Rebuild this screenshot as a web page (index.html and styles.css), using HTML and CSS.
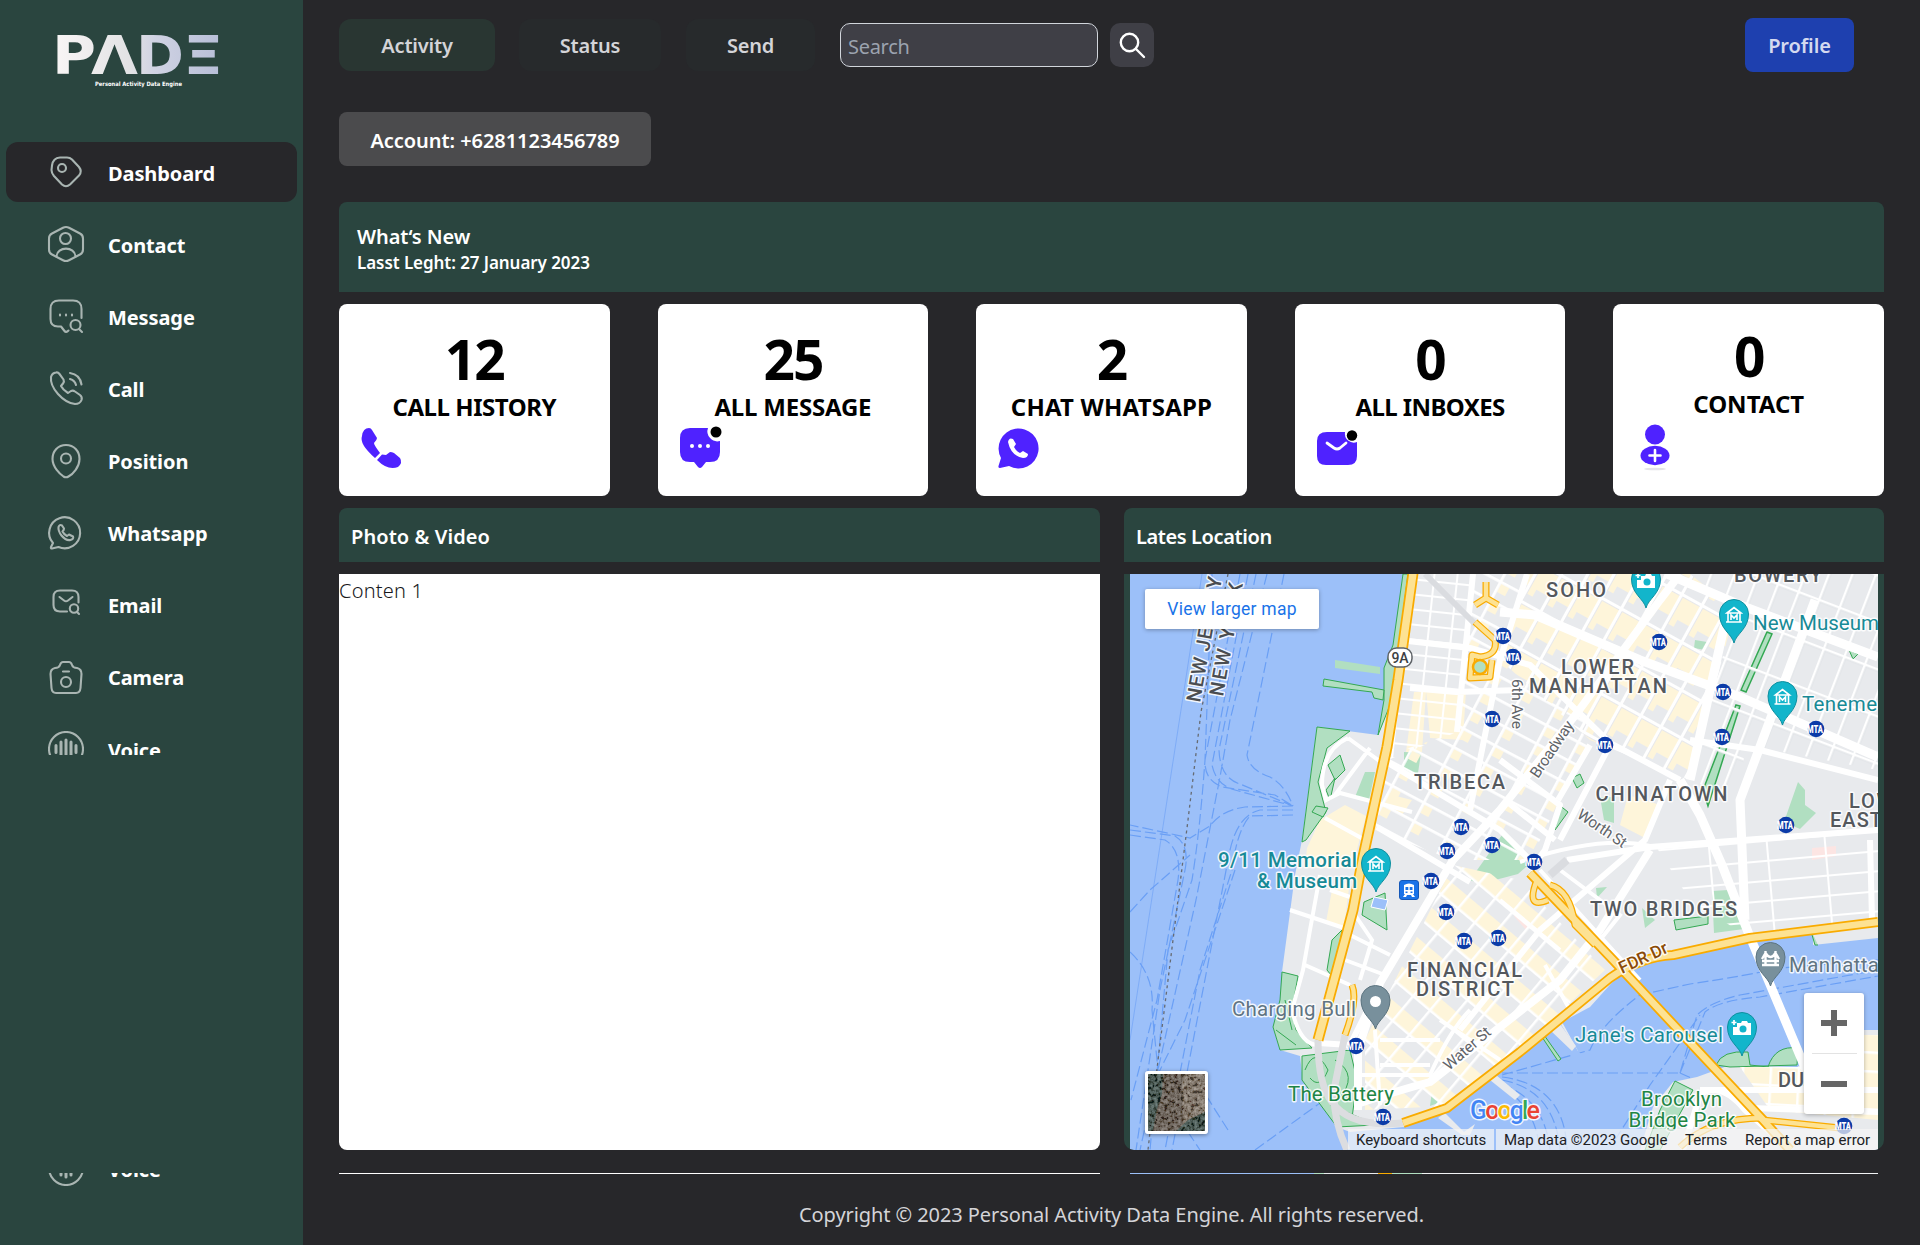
FILE: index.html
```html
<!DOCTYPE html>
<html lang="en">
<head>
<meta charset="utf-8">
<title>PADE Dashboard</title>
<link rel="stylesheet" href="styles.css">
</head>
<body>
<svg class="defs" aria-hidden="true">
  <defs>
    <symbol id="voice" viewBox="0 0 36 36"><circle cx="18" cy="18" r="17"/><path d="M8 14.500v7M13 11v14M18 9v18M23 11v14M28 14.500v7" stroke-width="3"/></symbol>
  </defs>
</svg>
<div class="app">
  <aside class="sidebar">
    <svg class="logo" viewBox="0 0 166 58" role="img" aria-label="PADE Personal Activity Data Engine">
      <defs><linearGradient id="lg" gradientUnits="userSpaceOnUse" x1="0" x2="162" y1="0" y2="0"><stop offset="0" stop-color="#f8f5f5"/><stop offset=".45" stop-color="#e2e2e4"/><stop offset=".6" stop-color="#d0d3e3"/><stop offset="1" stop-color="#b8bfd8"/></linearGradient></defs>
      <g class="logo-word" fill="url(#lg)">
        <text x="-5" y="40" textLength="44" lengthAdjust="spacingAndGlyphs">P</text>
        <text x="34" y="40" textLength="47" lengthAdjust="spacingAndGlyphs">Λ</text>
        <text x="79" y="40" textLength="48" lengthAdjust="spacingAndGlyphs">D</text>
        <text x="125.500" y="40" textLength="41" lengthAdjust="spacingAndGlyphs">Ξ</text>
      </g>
      <text class="logo-tag" x="38" y="52" textLength="87" lengthAdjust="spacingAndGlyphs">Personal Activity Data Engine</text>
    </svg>
    <nav class="nav">
      <a class="nav-item active"><svg viewBox="0 0 36 36"><path d="M4 11.500Q5 4 12 3.500L19 3.500Q22 3.500 24 5.500L31 13Q34.500 17.500 31 21.500L22 30.500Q18 34 14 30.500L6 22Q3.500 19 3.500 16Z"/><circle cx="14" cy="14" r="4"/></svg><span>Dashboard</span></a>
      <a class="nav-item"><svg viewBox="0 0 36 36"><path d="M15 1.800Q18 .2 21 1.800L32 7.500Q35 9 35 12.500V23.500Q35 27 32 28.500L21 34.200Q18 35.800 15 34.200L4 28.500Q1 27 1 23.500V12.500Q1 9 4 7.500Z"/><circle cx="17.500" cy="12.500" r="5.500"/><path d="M8.500 30.500C9 20 27 20 27.500 30.500"/></svg><span>Contact</span></a>
      <a class="nav-item"><svg viewBox="0 0 36 36"><path d="M33.500 20V11Q33.500 2.500 25 2.500H11Q2.500 2.500 2.500 11V21Q2.500 28.500 10 28.500H13L16.500 33Q18 35 20.500 32.500"/><circle cx="27.500" cy="27" r="5"/><path d="M31 31l3 3M12 16.500v1M18 16.500v1M24 16.500v1"/></svg><span>Message</span></a>
      <a class="nav-item"><svg viewBox="0 0 36 36"><path d="M3 7Q4 3 8 2.500Q10 2 11.500 4L15.500 9.500Q16.500 11.500 15 13.500L13 16Q15 20 20 23L23 21Q25 20 27 21.500L32 25Q34.500 27 33.500 30Q32 34 27 34Q18 33 10 24Q2 15 3 7ZM22 3Q32 4.500 33.500 14.500M22 9Q27 10.500 28 15"/></svg><span>Call</span></a>
      <a class="nav-item"><svg viewBox="0 0 36 36"><path d="M18 2C10 2 4.500 8 4.500 16C4.500 24 12 31 15.500 33.500Q18 35 20.500 33.500C25 31 31.500 24 31.500 16C31.500 8 26 2 18 2Z"/><circle cx="18" cy="15.500" r="5"/></svg><span>Position</span></a>
      <a class="nav-item"><svg viewBox="0 0 36 36"><path d="M5 28A15.500 15.500 0 1 1 10.500 32L4 33.500Q2.500 33.500 3 32Z"/><path d="M10.500 12Q11.500 9 14 10.500L16 13.500Q16 15 14.500 16.500Q16 19.500 19 21L21 19.500L25 21.500Q26 24 22.500 25Q18 26 13.500 20.500Q10 16 10.500 12Z"/></svg><span>Whatsapp</span></a>
      <a class="nav-item"><svg viewBox="0 0 36 36"><path d="M30.500 15.500V10Q30.500 3.500 24 3.500H12Q5.500 3.500 5.500 10V18Q5.500 24.500 12 24.500H19M11.500 10L16 13.500Q18 15 20 13.500L24.500 10"/><circle cx="26" cy="21.500" r="4.200"/><path d="M29 25l2 2"/></svg><span>Email</span></a>
      <a class="nav-item"><svg viewBox="0 0 36 36"><path d="M7 9Q11 9 12 6Q13 3 15 3H21Q23 3 24 6Q25 9 29 9Q33.500 10 33.500 15L32.500 29Q32 34 28 34H8Q4 34 3.500 29L2.500 15Q2.500 10 7 9ZM15 12.500h6"/><circle cx="18" cy="23" r="5"/></svg><span>Camera</span></a>
      <a class="nav-item"><svg><use href="#voice"/></svg><span>Voice</span></a>
    </nav>
    <div class="nav-tail"><a class="nav-item"><svg><use href="#voice"/></svg><span>Voice</span></a></div>
  </aside>

  <main class="main">
    <header class="topbar">
      <a class="tab tab-activity">Activity</a>
      <a class="tab tab-status">Status</a>
      <a class="tab tab-send">Send</a>
      <div class="search">Search</div>
      <button class="search-btn"><svg viewBox="0 0 28 28"><circle cx="11.500" cy="11.500" r="8.700"/><path d="M18 18l8 8"/></svg></button>
      <a class="profile">Profile</a>
    </header>
    <div class="account">Account: +6281123456789</div>
    <section class="news"><h2>What‘s New</h2><p>Lasst Leght: 27 January 2023</p></section>
    <section class="stats">
      <article class="stat"><strong>12</strong><span class="l1">CALL HISTORY</span>
        <svg viewBox="0 0 42 42"><path d="M2 9Q3 1 9 1Q11 1 12 3L17 11Q17 13 14 16Q14 18 20 26L15 31Q-1 17 2 9Z"/><path d="M17 33L22 27.500L26 28L30 25Q32 25 34 26L40 31Q43 36 38 40Q28 44 17 33Z"/></svg></article>
      <article class="stat"><strong>25</strong><span class="l2">ALL MESSAGE</span>
        <svg viewBox="0 0 42 42"><path d="M11 1H29A10 10 0 0 0 41 14V25Q41 35 31 35H27L23 40Q21 42 19 40L15 35H11Q1 35 1 25V11Q1 1 11 1Z"/><circle cx="37" cy="5" r="5.500" fill="#000"/><g fill="#fff"><circle cx="13" cy="19" r="2"/><circle cx="21" cy="19" r="2"/><circle cx="29" cy="19" r="2"/></g></svg></article>
      <article class="stat"><strong>2</strong><span class="l3">CHAT WHATSAPP</span>
        <svg viewBox="0 0 42 42"><path d="M4 31A20 20 0 1 1 12 39L3 41Q1 41 1.500 39Z"/><path fill="#fff" d="M11 15Q12 10 16 12L19 17L17 20Q19 24 23 26L26 24L31 27Q31 31 26 31Q14 29 11 15Z"/></svg></article>
      <article class="stat"><strong>0</strong><span class="l4">ALL INBOXES</span>
        <svg viewBox="0 0 42 42"><path d="M11 5H29A9 9 0 0 0 41 15V29Q41 38 32 38H10Q1 38 1 29V14Q1 5 11 5Z"/><circle cx="36" cy="8.500" r="5.200" fill="#000"/><path d="M11 16L18 21Q21 23 24 21L30 16" fill="none" stroke="#fff" stroke-width="2.800" stroke-linecap="round"/></svg></article>
      <article class="stat up"><strong>0</strong><span class="l5">CONTACT</span>
        <svg viewBox="0 0 42 42"><ellipse cx="21" cy="45" rx="11" ry="1.300" fill="#e4e4e8"/><circle cx="21" cy="10.500" r="10"/><ellipse cx="21" cy="31.500" rx="14.500" ry="9.700"/><path d="M21 26v11M15.500 31.500h11" stroke="#fff" stroke-width="2.600" stroke-linecap="round"/></svg></article>
    </section>
    <section class="panels">
      <div class="panel"><h3 class="p1">Photo &amp; Video</h3><div class="photo">Conten 1</div></div>
      <div class="panel"><h3 class="p2">Lates Location</h3>
        <div class="map-wrap">
          <svg class="map" viewBox="1130 574 748 576" preserveAspectRatio="none">
            <defs>
              <pattern id="gWest" width="23" height="15" patternUnits="userSpaceOnUse" patternTransform="translate(1410 578) rotate(6)"><path d="M0 0H23M0 0V15" stroke="#fff" stroke-width="4"/></pattern>
              <pattern id="gTri" width="36" height="21" patternUnits="userSpaceOnUse" patternTransform="translate(1500 580) rotate(28)"><path fill="#fef5da" d="M3 3h9v9H3z"/><path d="M0 0H36M0 0V21" stroke="#fff" stroke-width="5.500"/></pattern>
              <pattern id="gSoho" width="23" height="42" patternUnits="userSpaceOnUse" patternTransform="translate(1540 610) rotate(29)"><path fill="#fef5da" d="M0 0h23v26H10v8H0z"/><path d="M0 0H23M0 0V42" stroke="#dfe1e5" stroke-width="8"/><path d="M0 0H23M0 0V42" stroke="#fff" stroke-width="6.500"/></pattern>
              <pattern id="gEast" width="22" height="44" patternUnits="userSpaceOnUse" patternTransform="translate(1700 600) rotate(21)"><path d="M0 0H22M0 0V44" stroke="#d8dbe0" stroke-width="6.500"/><path d="M0 0H22M0 0V44" stroke="#fff" stroke-width="5"/></pattern>
              <pattern id="gTwo" width="58" height="20" patternUnits="userSpaceOnUse" patternTransform="translate(1650 850) rotate(-5)"><path d="M0 0H58M0 0V20" stroke="#fff" stroke-width="4"/></pattern>
              <pattern id="gFin" width="32" height="22" patternUnits="userSpaceOnUse" patternTransform="translate(1460 870) rotate(-50)"><path fill="#fef5da" d="M2 2h15v20H2z"/><path d="M0 0H32M0 0V22" stroke="#fff" stroke-width="5"/></pattern>
              <pattern id="gBk" width="28" height="19" patternUnits="userSpaceOnUse" patternTransform="translate(1770 1065) rotate(3)"><path fill="#fef5da" d="M0 0h28v19H0z"/><path d="M0 0H28M0 0V19" stroke="#fff" stroke-width="5"/></pattern>
              <symbol id="mta" viewBox="0 0 18 18" overflow="visible"><circle cx="9" cy="9" r="8.300" fill="#0b3ba8"/><text x="0" y="12.800" class="mta" textLength="16" lengthAdjust="spacingAndGlyphs">MTA</text></symbol>
              <path id="pin" d="M0 29C-2 20-14.500 15-14.500 0A14.500 14.500 0 0 1 14.500 0C14.500 15 2 20 0 29Z"/>
              <g id="museum" fill="none" stroke="#fff" stroke-width="1.600"><path d="M-7 -2L0 -7.500L7 -2ZM-8 7H8M-6 -2V7M6 -2V7M-3 5V0L0 3L3 0V5"/></g>
              <g id="camera"><path fill="#fff" d="M-5 -5H-1L0 -7H5L6 -5H9V7H-9V-1H-5Z"/><path d="M-8 -8V-3M-10.500 -5.500H-5.500" stroke="#fff" stroke-width="1.700"/><circle cx="1" cy="1" r="3.500" fill="#12b5cb"/></g>
            </defs>
            <rect x="1130" y="574" width="748" height="576" fill="#9cc0f9"/>
            <!-- ferry routes -->
            <g fill="none" stroke="#6a9ff5" stroke-width="1.200" stroke-dasharray="11 4">
              <path d="M1240 574L1205 760Q1204 780 1222 787L1275 795L1293 806M1248 574L1212 765Q1216 785 1235 790L1293 806M1256 574L1219 750Q1220 778 1240 784L1293 806M1267 574L1230 720L1220 777L1196 900L1140 1150M1284 574L1247 755Q1249 770 1270 777Q1285 785 1293 806M1293 806L1245 807Q1222 810 1210 826L1190 838L1130 825M1293 810L1260 810Q1238 815 1230 850L1172 1150M1293 815L1250 816Q1237 830 1232 870L1200 970L1165 1150M1130 830L1175 836Q1190 845 1185 870L1160 990L1136 1150M1130 835L1165 840Q1182 850 1178 880L1157 1000L1131 1100M1212 574L1205 760Q1200 830 1192 880L1168 950L1150 1150"/>
              <path d="M1130 912L1150 890L1190 855M1130 952Q1155 975 1152 1010L1160 1090L1200 1150M1255 1150L1320 1103M1235 870L1185 1020L1145 1100M1228 1130L1193 1075"/>
              <path d="M1502 1075L1590 1050Q1600 1025 1640 995L1690 984Q1750 975 1780 968L1878 960M1502 1073H1680L1697 1015Q1710 1002 1740 995L1878 970M1680 1073L1705 1012Q1720 1000 1760 997L1878 976M1502 1077Q1565 1085 1567 1150M1502 1080Q1555 1090 1560 1150M1502 1084Q1545 1100 1550 1150M1502 1088Q1535 1105 1540 1150M1615 1140L1650 1085L1700 1015M1680 1073L1700 1082"/>
            </g>
            <path d="M1202 574L1130 1040" stroke="#6a9ff5" fill="none" opacity=".6"/>
            <path d="M1228 574L1201 712L1188 820L1178 900L1158 1060L1148 1150" stroke="#666b73" stroke-width="1.300" stroke-dasharray="3 3.500" fill="none"/>
            <!-- land -->
            <path fill="#e8eaed" d="M1403 574L1393 660L1378 735L1317 727L1302 840L1295 875L1282 972L1293 975L1273 1027L1280 1050L1300 1056L1302 1073L1320 1100L1337 1127L1350 1132L1403 1127L1447 1110L1520 1052L1578 1051L1562 1022L1590 1007L1617 977L1640 960L1673 953L1813 928V945L1878 938V574Z"/>
            <path fill="#9cc0f9" d="M1520 1052L1560 1023L1578 1051L1582 1055H1520Z"/>
            <path fill="#e8eaed" d="M1878 1030H1863L1797 1067L1730 1065L1697 1077L1673 1082L1653 1107L1640 1150H1878ZM1560 1024L1550 1030L1572 1051L1576 1046ZM1496 1075L1520 1095L1515 1100L1490 1080ZM1445 1113L1464 1132L1475 1124L1470 1135H1462L1438 1118Z"/>
            <path fill="#fef5da" d="M1320 820L1345 805L1366 816L1352 868L1305 868L1307 848ZM1332 890L1350 880L1344 928L1326 922ZM1388 794L1412 800L1402 815L1384 806ZM1414 692H1426L1422 752H1406ZM1426 690H1466L1463 740L1430 738ZM1628 795L1660 805L1645 838L1620 825Z"/>
            <!-- parks -->
            <g fill="#b1dfc1" stroke="#34a853" stroke-width="1">
              <path d="M1403 574H1408L1392 700L1378 735L1384 700V668L1393 645Z"/>
              <path stroke="none" d="M1335 660L1380 667V674L1335 668Z"/><path d="M1324 679L1384 690L1383 700L1374 698L1372 692L1323 686Z"/>
              <path d="M1317 727L1350 731L1327 748L1318 782L1326 812L1306 840L1302 842Z"/><path stroke="none" d="M1365 772L1375 772L1369 800L1355 797Z"/><path stroke="none" d="M1404 752L1421 753L1418 773L1404 772Z"/>
              <path d="M1328 765L1340 755L1345 770L1335 780ZM1326 790L1335 778L1330 800ZM1316 806L1328 808L1323 817L1312 812Z"/>
              <path d="M1342 930L1335 980L1327 970L1332 940ZM1282 972L1298 976L1292 1010L1296 1030L1312 1048L1280 1050L1273 1027L1280 1000ZM1302 1056L1350 1050L1357 1080L1352 1118L1375 1125L1337 1127L1302 1080Z"/>
              <path fill="none" d="M1305 1070Q1315 1045 1328 1070Q1320 1090 1310 1078M1335 1060Q1360 1075 1338 1100M1276 1030L1296 1045M1285 1000L1292 1030M1330 1105L1370 1122"/>
              <path d="M1364 902L1385 893L1387 930L1362 915Z"/><path stroke="none" d="M1470 880L1502 835L1534 860L1518 874L1480 884Z"/>
              <path d="M1767 632L1772 634L1746 692L1741 690ZM1736 705L1740 706L1708 806L1703 790Z" stroke-width="1.500"/>
              <path stroke="none" d="M1600 797H1614V823L1604 820ZM1798 782L1805 790V805L1816 813L1800 829L1784 822ZM1712 891L1728 890L1744 929L1714 933ZM1642 908L1655 920L1645 928ZM1695 640L1707 642L1705 650L1694 648ZM1596 888L1607 887L1597 898ZM1433 1084L1446 1100L1430 1106Z"/>
              <path d="M1572 778L1580 774L1584 783L1577 788ZM1558 804L1568 812L1555 830ZM1674 920L1708 916V924L1676 930ZM1849 650L1858 654L1853 659ZM1810 928L1815 945H1818"/>
              <path d="M1716 1065Q1722 1050 1748 1052L1750 1065L1768 1067Q1775 1045 1798 1048L1797 1065L1730 1067ZM1675 1081L1693 1090L1660 1150H1645L1660 1110Z"/>
              <path d="M1540 1034L1544 1035L1561 1059L1558 1061Z"/>
            </g>
            <path fill="#fce5e3" d="M1812 848L1836 846V856L1812 860ZM1520 908L1532 924L1526 930L1514 916Z"/>
            <!-- street grids -->
            <path fill="url(#gWest)" d="M1413 574H1475L1457 732L1388 760Z"/>
            <path fill="url(#gTri)" d="M1475 574H1527L1500 660L1600 720L1530 860L1453 860L1375 830L1388 755L1457 732Z"/>
            <path fill="url(#gSoho)" d="M1527 574H1690L1735 610L1690 780L1590 740L1500 660Z"/>
            <path fill="url(#gEast)" d="M1690 574H1878V770L1745 745L1740 800L1690 780L1735 610Z"/>
            <path fill="url(#gTwo)" d="M1655 845L1878 830V922L1750 938L1690 900Z"/>
            <path fill="url(#gFin)" d="M1453 865L1520 880L1605 970L1520 1050L1447 1106L1365 1110V1040Z"/>
            <path fill="url(#gBk)" d="M1740 1067H1800L1863 1035H1878V1120L1770 1110Z"/>
            <g fill="none" stroke="#fff" stroke-width="4">
              <path d="M1348 738Q1322 750 1322 785L1326 800L1340 793L1412 812M1348 738L1385 765M1370 748L1335 795M1325 818L1365 840M1320 875L1310 930L1303 970L1292 1010Q1300 1045 1318 1045M1330 890L1350 897M1290 910L1350 930M1305 965L1350 985M1355 915L1372 940L1360 980M1350 935L1390 955M1345 960L1385 975M1375 1030L1380 1105M1380 1040H1440M1380 1065H1430M1360 1075H1430Q1450 1030 1470 1010M1440 1020L1500 1060M1540 870L1640 980M1545 965L1570 1010M1560 870L1620 915L1600 940"/>
              <path d="M1520 862Q1600 835 1650 846M1630 882L1648 850M1500 900L1560 950"/>
            </g>
            <g fill="none" stroke="#fff" stroke-linejoin="round">
              <path stroke-width="8" d="M1358 1110V1050L1380 983L1453 860L1500 810L1577 713L1660 600L1680 574"/>
              <path stroke-width="6" d="M1527 574L1500 660L1470 810M1473 574L1457 732M1408 641L1470 648L1530 665L1610 743L1680 780M1410 688L1456 692L1520 690M1388 763L1500 830L1530 860M1377 827L1470 882M1500 760L1560 805L1545 850L1530 870M1505 800L1555 840"/>
              <path stroke-width="9" d="M1500 612L1535 615L1640 660L1740 697L1878 757M1665 573L1740 605L1878 657M1730 600L1690 780M1815 600L1740 800L1745 920M1680 780L1700 815L1722 865L1748 932L1806 1070"/>
              <path stroke-width="6" d="M1670 780L1645 840L1540 930L1460 1030M1567 860L1650 847L1878 830M1878 780L1760 750L1690 740M1870 840L1872 920M1590 745L1558 800M1610 745L1560 840M1380 985L1350 1045L1318 1043"/>
              <path stroke-width="8" d="M1360 1103Q1400 1090 1430 1082L1560 980L1600 930L1650 850"/>
              <path stroke-width="6" d="M1683 1150L1700 1095Q1720 1080 1745 1110L1790 1150M1700 1090H1878M1750 1108L1878 1112"/>
            </g>
            <path d="M1425 574L1475 624" stroke="#dadce0" stroke-width="6"/>
            <path d="M1567 860L1550 875" stroke="#dadce0" stroke-width="8"/>
            <!-- tunnels and motorways -->
            <g fill="none" stroke="#dcdde0" stroke-width="7"><path d="M1318 1040Q1318 1085 1332 1102Q1350 1128 1403 1123M1345 1035L1334 1090Q1333 1120 1347 1150"/></g>
            <g fill="none" stroke="#f9ab00" stroke-linejoin="round">
              <path stroke-width="11" d="M1413 573L1398 680L1387 747L1363 857L1353 910L1318 1040"/>
              <path stroke-width="10" d="M1403 1123L1447 1108L1520 1052L1610 978Q1640 957 1673 955L1750 938L1878 922M1530 873L1613 960L1700 1053L1763 1120L1790 1150"/>
              <path stroke-width="7" d="M1763 1120L1840 1128M1680 1147Q1710 1118 1763 1118M1475 622L1495 640Q1498 655 1480 657L1472 655L1470 678L1490 677L1492 660M1486 582V598L1475 605M1486 598L1498 605M1352 985Q1358 1000 1345 1035M1537 880Q1525 910 1548 900M1550 885Q1570 890 1575 925L1595 945"/>
            </g>
            <g fill="none" stroke="#fde293" stroke-linejoin="round">
              <path stroke-width="7.500" d="M1413 573L1398 680L1387 747L1363 857L1353 910L1318 1040"/>
              <path stroke-width="6.500" d="M1403 1123L1447 1108L1520 1052L1610 978Q1640 957 1673 955L1750 938L1878 922M1530 873L1613 960L1700 1053L1763 1120L1790 1150"/>
              <path stroke-width="4.500" d="M1763 1120L1840 1128M1680 1147Q1710 1118 1763 1118M1475 622L1495 640Q1498 655 1480 657L1472 655L1470 678L1490 677L1492 660M1486 582V598L1475 605M1486 598L1498 605M1352 985Q1358 1000 1345 1035M1537 880Q1525 910 1548 900M1550 885Q1570 890 1575 925L1595 945"/>
            </g>
            <circle cx="1480" cy="667" r="7" fill="#b1dfc1" stroke="#f9ab00" stroke-width="2.500"/>
            <path d="M1374 897L1388 900L1385 910L1371 907Z" fill="#9cc0f9" stroke="#fff"/>
            <!-- subway stops -->
            <g>
              <use href="#mta" x="1494" y="627" width="18" height="18"/><use href="#mta" x="1504" y="648" width="18" height="18"/><use href="#mta" x="1650" y="633" width="18" height="18"/><use href="#mta" x="1714" y="683" width="18" height="18"/><use href="#mta" x="1713" y="728" width="18" height="18"/><use href="#mta" x="1807" y="720" width="18" height="18"/><use href="#mta" x="1483" y="710" width="18" height="18"/><use href="#mta" x="1596" y="736" width="18" height="18"/><use href="#mta" x="1452" y="818" width="18" height="18"/><use href="#mta" x="1438" y="842" width="18" height="18"/><use href="#mta" x="1483" y="836" width="18" height="18"/><use href="#mta" x="1525" y="853" width="18" height="18"/><use href="#mta" x="1777" y="816" width="18" height="18"/><use href="#mta" x="1422" y="872" width="18" height="18"/><use href="#mta" x="1437" y="903" width="18" height="18"/><use href="#mta" x="1455" y="932" width="18" height="18"/><use href="#mta" x="1489" y="929" width="18" height="18"/><use href="#mta" x="1347" y="1037" width="18" height="18"/><use href="#mta" x="1374" y="1108" width="18" height="18"/><use href="#mta" x="1835" y="1117" width="18" height="18"/>
            </g>
            <g><rect x="1399.500" y="880.500" width="19" height="19" rx="2.500" fill="#1a73e8" stroke="#1558b8"/><path fill="#fff" d="M1404 885Q1409 882 1414 885V894H1404ZM1405 894L1403 897H1406L1407 895H1411L1412 897H1415L1413 894Z"/><path fill="#1a73e8" d="M1405.500 887H1408.300V890H1405.500ZM1409.700 887H1412.500V890H1409.700ZM1405.500 891.500h2v1.500h-2ZM1410.500 891.500h2v1.500h-2Z"/></g>
            <rect x="1388" y="648" width="24" height="19" rx="8.500" fill="#fff" stroke="#5f6368" stroke-width="1.500"/><text x="1400" y="662.500" class="shield">9A</text>
            <!-- pins -->
            <g stroke-width="1">
              <g fill="#12b5cb" stroke="#0e8f9f"><use href="#pin" x="1646" y="579"/><use href="#pin" x="1734" y="614"/><use href="#pin" x="1782.500" y="696"/><use href="#pin" x="1376" y="863"/><use href="#pin" x="1742" y="1027"/></g>
              <g fill="#78909c" stroke="#5c7480"><use href="#pin" x="1375.500" y="1000"/><use href="#pin" x="1770.500" y="957"/></g>
              <use href="#museum" x="1734" y="615"/><use href="#museum" x="1782.500" y="697"/><use href="#museum" x="1376" y="864"/><use href="#camera" x="1646" y="581"/><use href="#camera" x="1742" y="1028"/>
              <circle cx="1375.500" cy="1001.500" r="5.500" fill="#fff"/>
              <path d="M1762 965H1779M1765.500 951V966M1775.500 951V966M1762 959L1765.500 953Q1770.500 961 1775.500 953L1779 959M1762 961H1779" stroke="#fff" stroke-width="2.400" fill="none"/>
            </g>
            <!-- labels -->
            <g class="area">
              <text x="1546" y="597" textLength="60">SOHO</text><text x="1734" y="581.500" textLength="88">BOWERY</text><text x="1561" y="673.500" textLength="73">LOWER</text><text x="1529" y="693" textLength="138">MANHATTAN</text><text x="1414" y="789" textLength="91">TRIBECA</text><text x="1595.500" y="801" textLength="132">CHINATOWN</text><text x="1849" y="807.500" textLength="45">LOW</text><text x="1830" y="827" textLength="52">EAST</text><text x="1590" y="916" textLength="147">TWO BRIDGES</text><text x="1407" y="976.500" textLength="115">FINANCIAL</text><text x="1416" y="995.500" textLength="98">DISTRICT</text><text x="1778" y="1087">DUMBO</text>
            </g>
            <g class="border"><text transform="translate(1200 703) rotate(-80)" textLength="127">NEW JERSEY</text><text transform="translate(1223 697) rotate(-80)" textLength="115">NEW YORK</text></g>
            <g class="poi"><text x="1753" y="629.500" textLength="126">New Museum</text><text x="1802" y="711" textLength="75">Teneme</text><text x="1575" y="1042" textLength="148">Jane's Carousel</text></g>
            <g class="poi strong"><text x="1218" y="867" textLength="139">9/11 Memorial</text><text x="1257" y="888" textLength="100">&amp; Museum</text></g>
            <g class="poi gray"><text x="1232" y="1015.500" textLength="124">Charging Bull</text><text x="1789" y="972" textLength="90">Manhatta</text></g>
            <g class="poi green"><text x="1288" y="1101" textLength="106">The Battery</text><text x="1641" y="1106" textLength="81">Brooklyn</text><text x="1628.500" y="1127" textLength="107">Bridge Park</text></g>
            <g class="road"><text transform="translate(1512 679) rotate(90)" textLength="50">6th Ave</text><text transform="translate(1538 779) rotate(-56)" textLength="65">Broadway</text><text transform="translate(1576 817) rotate(34)" textLength="56">Worth St</text><text transform="translate(1449 1071) rotate(-41)" textLength="57">Water St</text><text class="fdr" transform="translate(1622 974) rotate(-25)" textLength="52">FDR Dr</text></g>
            <g class="google"><text x="1470" y="1119" textLength="70"><tspan fill="#4285f4">G</tspan><tspan fill="#ea4335">o</tspan><tspan fill="#fbbc04">o</tspan><tspan fill="#4285f4">g</tspan><tspan fill="#34a853">l</tspan><tspan fill="#ea4335">e</tspan></text></g>
          </svg>
          <a class="larger">View larger map</a>
          <div class="sat"><svg viewBox="0 0 57 57"><defs><filter id="n" x="0" y="0" width="1" height="1"><feTurbulence type="fractalNoise" baseFrequency=".3" numOctaves="3" seed="4"/><feColorMatrix values="1.6 0 0 0 -.5 1.6 0 0 0 -.53 1.6 0 0 0 -.56 0 0 0 0 .45"/></filter></defs><rect width="57" height="57" fill="#4b4138"/><path fill="#75685a" d="M34 0H57V40L35 50Z"/><path fill="#0f302d" d="M0 0H15L14 20L9 35L5 57H0ZM28 57L40 46L57 38V57Z"/><rect width="57" height="57" filter="url(#n)"/></svg></div>
          <div class="zoom"><i class="plus"></i><hr><i class="minus"></i></div>
          <div class="credits"><span class="c1">Keyboard shortcuts</span><span class="c2">Map data ©2023 Google</span><span class="c3">Terms</span><span class="c4">Report a map error</span></div>
        </div>
      </div>
    </section>
    <div class="next-row"><i class="next-photo"></i><i class="next-map"></i></div>
    <footer class="footer"><span>Copyright © 2023 Personal Activity Data Engine. All rights reserved.</span></footer>
  </main>
</div>
</body>
</html>
```
FILE: styles.css
```css
* { box-sizing: border-box; }
body { margin: 0; background: #27272a; color: #fff; font-family: "Segoe UI", "Noto Sans", "Open Sans", sans-serif; font-size: 20px; overflow: hidden; }
h2, h3, p { margin: 0; }
.defs { display: none; }
.app { display: flex; width: 1920px; height: 1245px; }

.sidebar { width: 303px; flex: none; background: #2a453f; display: flex; flex-direction: column; }
.logo { width: 166px; height: 58px; margin: 34px 0 50px 57px; overflow: visible; }
.logo-word { font: bold 53.500px "DejaVu Sans", sans-serif; }
.logo-tag { font: bold 6px "DejaVu Sans", sans-serif; fill: #fff; }
.nav { height: 613px; padding: 0 6px; overflow: hidden; display: flex; flex-direction: column; gap: 12.150px; }
.nav-item { height: 60px; flex: none; display: flex; align-items: center; padding-left: 42px; gap: 24px; border-radius: 12px; font-weight: 700; letter-spacing: -.1px; }
.nav-item.active { background: #27272a; }
.nav-item span { padding-top: 2px; }
.nav-item svg { width: 36px; height: 36px; overflow: visible; fill: none; stroke: #a9b5b2; stroke-width: 2.100; stroke-linecap: round; stroke-linejoin: round; }
.nav-tail { margin-top: 418px; height: 25px; padding: 0 6px; overflow: hidden; display: flex; align-items: flex-end; }

.main { flex: 1; padding: 0 36px; display: flex; flex-direction: column; }
.topbar { display: flex; align-items: center; height: 90px; }
.tab { height: 52px; display: flex; align-items: center; justify-content: center; border-radius: 12px; background: #272a2c; color: #d4d4d8; font-weight: 600; letter-spacing: -.2px; padding-top: 1px; }
.tab-activity { width: 156px; background: #293632; margin-right: 24px; }
.tab-status { width: 142px; margin-right: 25px; }
.tab-send { width: 129px; margin-right: 25px; }
.search { width: 258px; height: 44px; border: 1px solid #d1d5db; border-radius: 10px; background: #3f3f46; color: #9ca3af; padding: 8px 7px; line-height: 29px; letter-spacing: -.3px; }
.search-btn { width: 44px; height: 44px; margin-left: 12px; padding: 0; border: 0; border-radius: 10px; background: #3f3f46; display: grid; place-items: center; }
.search-btn svg { width: 28px; height: 28px; fill: none; stroke: #fff; stroke-width: 2.400; stroke-linecap: round; }
.profile { margin-left: auto; margin-right: 30px; width: 109px; height: 54px; border-radius: 8px; background: #1e40af; color: #d4d9ef; display: grid; place-items: center; font-weight: 600; letter-spacing: -.1px; padding-top: 1px; }
.account { width: 312px; height: 54px; margin-top: 22px; flex: none; border-radius: 8px; background: #4b4b4d; display: grid; place-items: center; font-weight: 600; padding-top: 2px; letter-spacing: -.05px; white-space: nowrap; }
.news { height: 90px; margin-top: 36px; flex: none; padding: 21px 18px; border-radius: 8px 8px 0 0; background: #2a453f; }
.news h2 { font-size: 20px; font-weight: 600; line-height: 28px; letter-spacing: -.05px; }
.news p { font-size: 17px; font-weight: 600; line-height: 24px; letter-spacing: -.07px; }

.stats { display: grid; grid-template-columns: repeat(5, 1fr); gap: 48px; height: 192px; margin-top: 12px; flex: none; }
.stat { background: #fff; color: #000; border-radius: 8px; padding: 25px 21px; display: flex; flex-direction: column; align-items: center; }
.stat.up { padding-top: 22px; }
.stat strong { font-size: 55px; line-height: 60px; letter-spacing: -2px; }
.stat span { font-size: 24px; line-height: 33px; margin-top: 1px; font-weight: 700; white-space: nowrap; }
.stat .l1 { letter-spacing: -.45px; }
.stat .l2 { letter-spacing: -.2px; }
.stat .l3 { letter-spacing: .2px; }
.stat .l4 { letter-spacing: -.6px; }
.stat svg { width: 42px; height: 42px; margin-top: 4px; align-self: flex-start; fill: #4f22ff; overflow: visible; }

.panels { display: grid; grid-template-columns: 761px 760px; gap: 24px; margin-top: 12px; flex: none; }
.panel h3 { height: 54px; padding: 2px 12px 0; margin-bottom: 12px; background: #2a453f; border-radius: 8px 8px 0 0; font-size: 20px; font-weight: 600; line-height: 54px; }
.p1 { letter-spacing: .08px; }
.p2 { letter-spacing: -.4px; }
.photo { height: 576px; background: #fff; color: #18181b; border-radius: 0 0 8px 8px; line-height: 34px; font-weight: 300; letter-spacing: .2px; }
.map-wrap { position: relative; height: 576px; padding: 0 6px; background: #2a453f; border-radius: 0 0 10px 10px; overflow: hidden; }
.map { display: block; width: 748px; height: 576px; font-family: Roboto, sans-serif; overflow: hidden; }
.map text { paint-order: stroke; stroke: #fff; stroke-width: 3px; stroke-linejoin: round; stroke-opacity: .85; }
.area { font-size: 20px; font-weight: 500; fill: #54585d; }
.border { font-size: 20px; font-weight: 500; fill: #4a4d51; }
.poi { font-size: 20.500px; fill: #178a96; }
.poi.strong { font-weight: 500; }
.poi.gray { fill: #607482; }
.poi.green { fill: #1e8545; }
.road { font-size: 15.500px; fill: #5f6368; }
.road .fdr { font-size: 17px; fill: #8a4b08; font-weight: 500; }
.google { font-size: 25px; font-weight: 500; }
.map .mta { font-size: 10.500px; font-weight: 900; fill: #fff; stroke: none; }
.map .shield { font-size: 14px; font-weight: 500; fill: #3c4043; stroke: none; text-anchor: middle; }
.larger { position: absolute; left: 21px; top: 15px; width: 174px; height: 40px; background: #fff; border-radius: 2px; box-shadow: 0 1px 4px rgba(0,0,0,.3); color: #1a73e8; font: 17.500px/40px Roboto, sans-serif; text-align: center; letter-spacing: .25px; }
.sat { position: absolute; left: 21px; top: 497px; width: 63px; height: 63px; border: 3px solid #fff; border-radius: 3px; box-shadow: 0 1px 4px rgba(0,0,0,.4); overflow: hidden; }
.sat svg { display: block; width: 57px; height: 57px; }
.zoom { position: absolute; left: 680px; top: 419px; width: 60px; height: 121px; background: #fff; border-radius: 3px; box-shadow: 0 1px 4px rgba(0,0,0,.3); display: flex; flex-direction: column; align-items: center; }
.zoom hr { width: 45px; height: 1px; border: 0; margin: 17px 0 27px; background: #e3e3e3; flex: none; }
.plus { width: 26px; height: 26px; margin-top: 17px; background: linear-gradient(#666, #666) center/26px 6px no-repeat, linear-gradient(#666, #666) center/6px 26px no-repeat; }
.minus { width: 26px; height: 6px; background: #666; }
.credits { position: absolute; right: 6px; bottom: 0; height: 21px; width: 530px; display: flex; font: 15px/22px Roboto, sans-serif; color: #202124; white-space: nowrap; background: rgba(245,245,245,.72); }
.c1 { width: 148px; padding-left: 8px; border-right: 2px solid #9cc0f9; }
.c2 { width: 189px; padding-left: 8px; }
.c3 { width: 60px; }
.c4 { flex: 1; }

.next-row { display: grid; grid-template-columns: 761px 748px; gap: 30px; height: 1px; margin-top: 23px; flex: none; }
.next-photo { background: #fff; }
.next-map { background: linear-gradient(90deg, #9cc0f9 184px, #b1dfc1 184px 194px, #e8eaed 194px 248px, #f9ab00 248px 262px, #b1dfc1 262px 292px, #f1f3f4 292px); }
.footer { height: 71px; display: grid; place-items: center; color: #d4d4d8; padding-top: 10px; letter-spacing: -.08px; }
```
